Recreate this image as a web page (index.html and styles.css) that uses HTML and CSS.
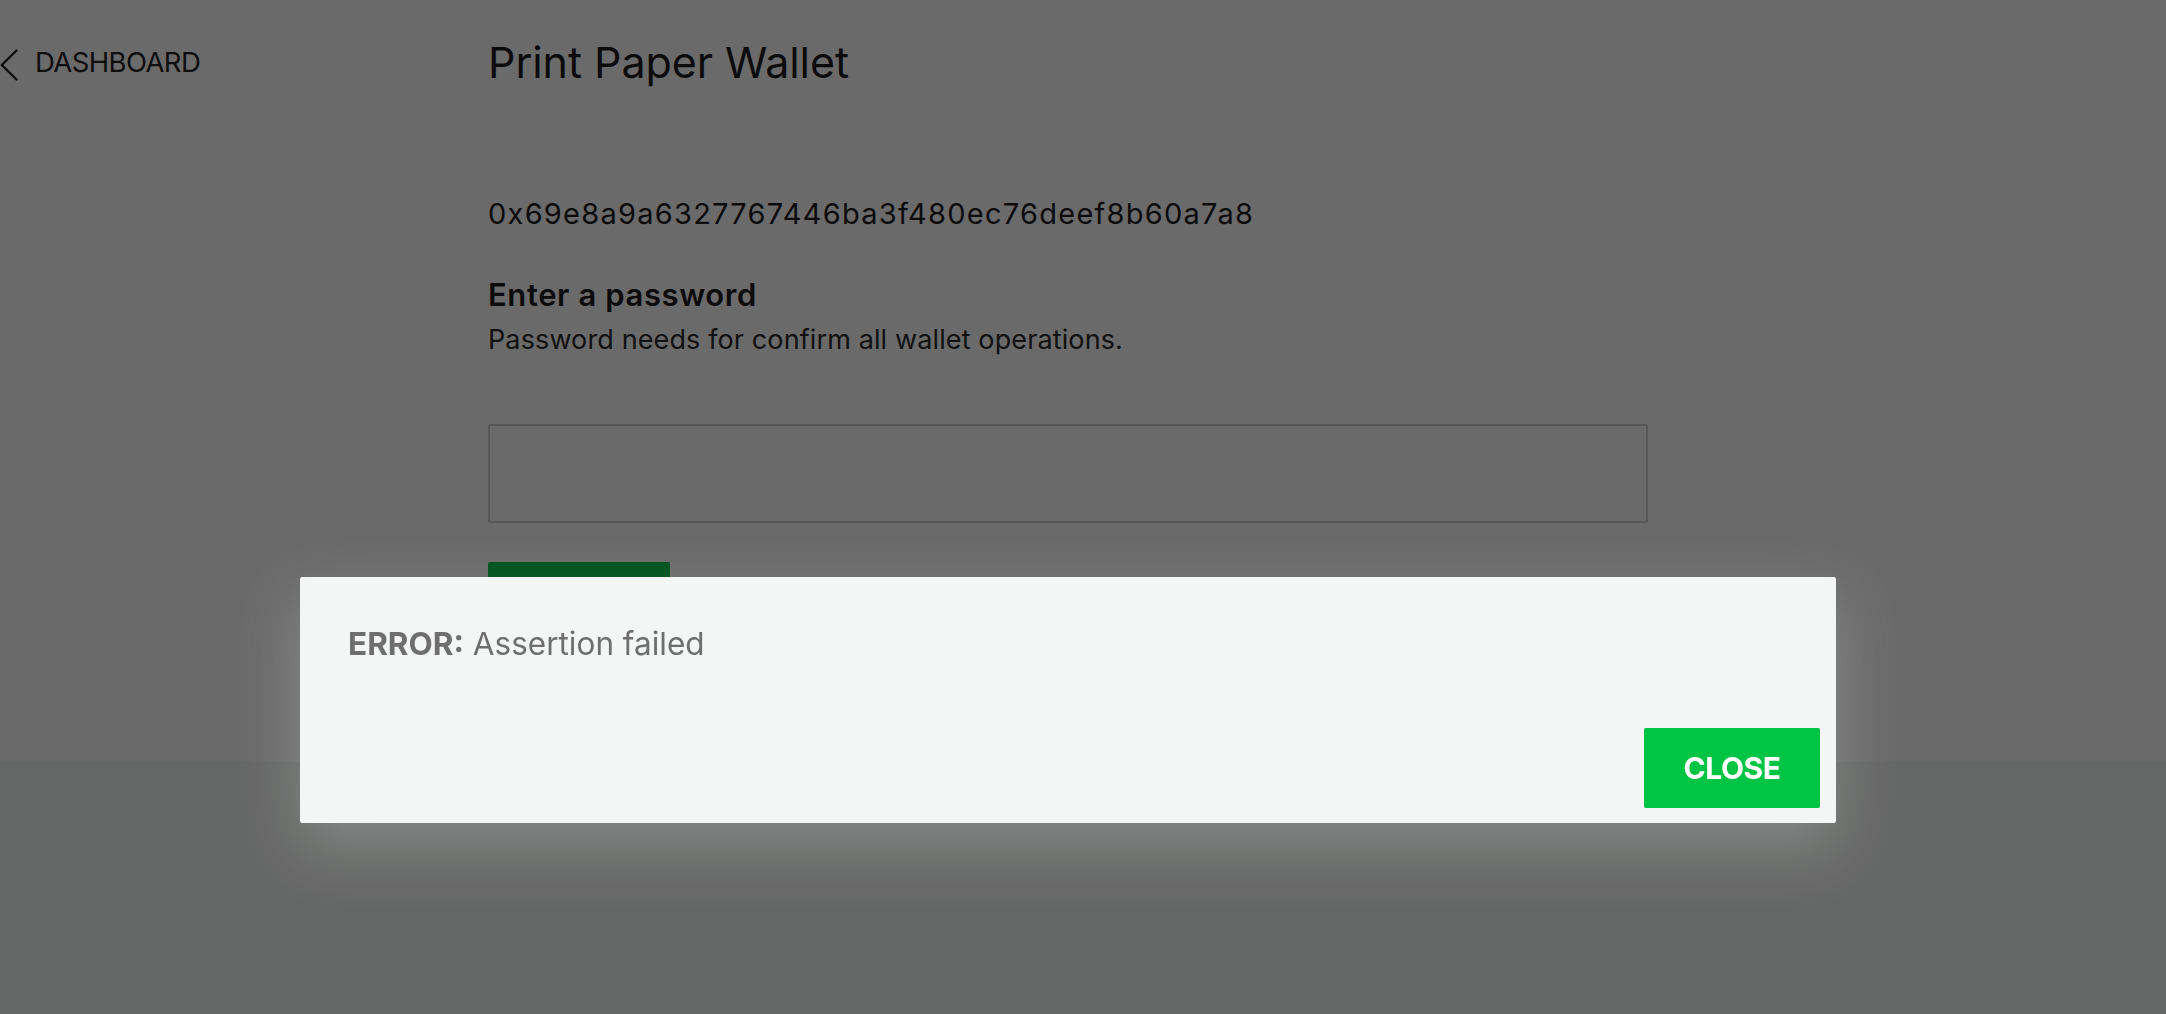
FILE: index.html
```html
<!DOCTYPE html>
<html lang="en">
<head>
<meta charset="utf-8">
<title>Print Paper Wallet</title>
<link rel="stylesheet" href="styles.css">
</head>
<body>
<div class="page">
  <aside class="sidebar">
    <a class="back" href="#">
      <svg class="chev" width="18" height="32" viewBox="0 0 18 32"><path d="M16.5 1.5 L1.8 16 L16.5 30.5" fill="none" stroke="#1f1f1f" stroke-width="2.4" stroke-linecap="round" stroke-linejoin="round"/></svg>
      <span>DASHBOARD</span>
    </a>
  </aside>
  <main class="main">
    <h1 class="title">Print Paper Wallet</h1>
    <div class="address">0x69e8a9a6327767446ba3f480ec76deef8b60a7a8</div>
    <div class="label">Enter a password</div>
    <div class="desc">Password needs for confirm all wallet operations.</div>
    <input class="pw" type="password">
    <button class="primary" type="button">PRINT</button>
  </main>
</div>
<div class="backdrop"></div>
<div class="modal">
  <p class="msg"><b>ERROR:</b> Assertion failed</p>
  <div class="actions"><button class="close" type="button">CLOSE</button></div>
</div>
</body>
</html>
```
FILE: styles.css
```css
html, body {
  margin: 0;
  padding: 0;
}
body {
  background: #f4f7f5;
  font-family: Inter, "Noto Sans", sans-serif;
  color: #222;
  height: 1014px;
  overflow: hidden;
}
.page {
  display: flex;
  background: #fff;
  height: 762px;
}
.sidebar {
  width: 488px;
  flex: none;
  padding-top: 43px;
  box-sizing: border-box;
}
.back {
  display: flex;
  align-items: center;
  gap: 17px;
  color: #222;
  text-decoration: none;
  font-size: 27.5px;
  line-height: 34px;
  letter-spacing: -0.6px;
}
.chev {
  display: block;
  margin-top: 6px;
}
.main {
  width: 1160px;
  flex: none;
  padding-top: 36px;
}
.title {
  margin: 0;
  font-weight: 400;
  font-size: 43px;
  line-height: 52px;
  letter-spacing: -0.05px;
  color: #1c1c1c;
}
.address {
  margin-top: 108px;
  font-size: 29px;
  line-height: 36px;
  letter-spacing: 1.25px;
  color: #1c1c1c;
}
.label {
  margin-top: 44px;
  font-size: 31px;
  line-height: 38px;
  font-weight: 600;
  letter-spacing: 0.6px;
  color: #1c1c1c;
}
.desc {
  margin-top: 10px;
  font-size: 27px;
  line-height: 32px;
  letter-spacing: 0.12px;
  color: #2a2a2a;
}
.pw {
  display: block;
  margin-top: 68px;
  width: 1160px;
  height: 99px;
  box-sizing: border-box;
  border: 2px solid #cfcfcf;
  border-radius: 2px;
  background: #fff;
}
.primary {
  display: block;
  margin-top: 39px;
  width: 182px;
  height: 80px;
  border: 0;
  border-radius: 2px;
  background: #00c443;
  color: #fff;
  font-family: inherit;
  font-weight: 700;
  font-size: 30px;
}
.backdrop {
  position: fixed;
  inset: 0;
  background: rgba(0, 0, 0, 0.585);
}
.modal {
  position: fixed;
  left: 300px;
  top: 577px;
  width: 1536px;
  height: 246px;
  box-sizing: border-box;
  padding: 47px 16px 15px 48px;
  background: #f4f6f5;
  border-radius: 2px;
  box-shadow: 0 24px 60px rgba(215, 228, 220, 0.28);
  display: flex;
  flex-direction: column;
}
.msg {
  margin: 0;
  font-size: 31.5px;
  line-height: 40px;
  color: #6e6e6e;
}
.msg b {
  font-weight: 700;
}
.actions {
  margin-top: auto;
  display: flex;
  justify-content: flex-end;
}
.close {
  width: 176px;
  height: 80px;
  border: 0;
  border-radius: 2px;
  background: #00c443;
  color: #fff;
  font-family: inherit;
  font-weight: 700;
  font-size: 30px;
  letter-spacing: -0.5px;
  padding: 0;
}
```
